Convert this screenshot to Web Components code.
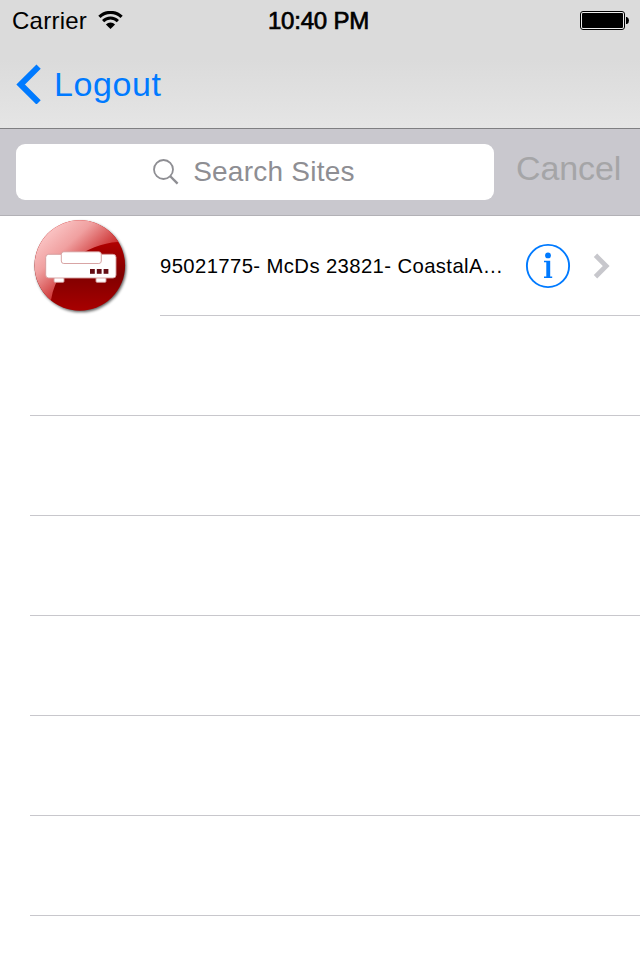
<!DOCTYPE html>
<html lang="en">
<head>
<meta charset="utf-8">
<title>Sites</title>
<style>
  body {
    margin: 0;
    background: #fff;
    font-family: "Liberation Sans", Arial, sans-serif;
  }
</style>
</head>
<body>
<sites-app></sites-app>

<script>
class StatusBar extends HTMLElement {
  connectedCallback() {
    this.attachShadow({ mode: 'open' });
    this.shadowRoot.innerHTML = `
      <style>
        :host {
          display: grid;
          grid-template-columns: 1fr auto 1fr;
          align-items: center;
          height: 40px;
          padding: 0 11px 0 12px;
          font-size: 24px;
          color: #000;
        }
        span {
          line-height: 38px;
          padding-top: 2px;
        }
        .left {
          display: flex;
          align-items: center;
          gap: 11px;
          letter-spacing: 0.25px;
        }
        .time {
          -webkit-text-stroke: 0.7px #000;
          letter-spacing: -0.2px;
          margin-right: 4px;
        }
        .battery {
          justify-self: end;
        }
        svg { display: block; }
      </style>
      <div class="left">
        <span><slot name="carrier"></slot></span>
        <svg width="25" height="18" viewBox="0 0 25 18">
          <path d="M1.4 5.9 A16 16 0 0 1 23.6 5.9" fill="none" stroke="#000" stroke-width="3.2"/>
          <path d="M5.1 10.1 A10.4 10.4 0 0 1 19.9 10.1" fill="none" stroke="#000" stroke-width="3"/>
          <path d="M12.5 18 L7.9 13.4 A6.6 6.6 0 0 1 17.1 13.4 Z"/>
        </svg>
      </div>
      <span class="time"><slot name="time"></slot></span>
      <svg class="battery" width="49" height="19" viewBox="0 0 49 19">
        <rect x="0.5" y="0.5" width="44" height="18" rx="2.5" fill="#ededed" stroke="#000"/>
        <rect x="2" y="2" width="41" height="15" rx="1"/>
        <path d="M46 6 H47 Q49 7 49 9.5 Q49 12 47 13 H46 Z"/>
      </svg>
    `;
  }
}

class NavBar extends HTMLElement {
  connectedCallback() {
    this.attachShadow({ mode: 'open' });
    this.shadowRoot.innerHTML = `
      <style>
        :host {
          display: flex;
          align-items: center;
          height: 88px;
          padding-left: 16px;
          color: #007aff;
        }
        a {
          display: flex;
          align-items: center;
          gap: 12px;
          font-size: 34px;
          line-height: 40px;
          letter-spacing: 0.6px;
        }
        svg { display: block; }
      </style>
      <a>
        <svg width="26" height="40" viewBox="0 0 26 40">
          <path d="M22.6 2.6 L4.6 20.5 L22.6 38.4" fill="none" stroke="currentColor" stroke-width="6"/>
        </svg>
        <span><slot></slot></span>
      </a>
    `;
  }
}

class SearchBar extends HTMLElement {
  connectedCallback() {
    this.attachShadow({ mode: 'open' });
    this.shadowRoot.innerHTML = `
      <style>
        :host {
          display: flex;
          box-sizing: border-box;
          height: 88px;
          padding: 15px 16px 0;
          gap: 22px;
          background: #c9c8ce;
          border-top: 1px solid #7f7f82;
          border-bottom: 1px solid #b2b1b6;
        }
        .field {
          display: flex;
          align-items: center;
          justify-content: center;
          flex: none;
          box-sizing: border-box;
          width: 478px;
          height: 56px;
          padding-right: 2px;
          gap: 14px;
          border-radius: 9px;
          background: #fff;
          color: #8e8e93;
          font-size: 28px;
          line-height: 56px;
          letter-spacing: 0.25px;
        }
        .cancel {
          font-size: 34px;
          line-height: 49px;
          letter-spacing: -0.1px;
          color: #a5a5a7;
        }
        svg { display: block; }
      </style>
      <div class="field">
        <svg width="26" height="26" viewBox="0 0 26 26" fill="none" stroke="currentColor">
          <circle cx="10.5" cy="10.5" r="9.5" stroke-width="1.8"/>
          <path d="M17 17 L24.6 24.6" stroke-width="2.4"/>
        </svg>
        <span><slot></slot></span>
      </div>
      <span class="cancel">Cancel</span>
    `;
  }
}

class SiteRow extends HTMLElement {
  connectedCallback() {
    this.attachShadow({ mode: 'open' });
    this.shadowRoot.innerHTML = `
      <style>
        :host {
          display: flex;
          box-sizing: border-box;
          height: 100px;
          padding-left: 30px;
        }
        .icon {
          width: 130px;
        }
        .content {
          display: flex;
          align-items: center;
          flex: 1;
          border-bottom: 1px solid #c8c7cc;
          color: #000;
        }
        .name {
          width: 365px;
          padding-top: 2px;
          font-size: 20.3px;
          letter-spacing: 0.39px;
          white-space: nowrap;
        }
        .chevron {
          margin-left: 22px;
        }
        svg { display: block; }
      </style>
      <div class="icon">
        <svg width="100" height="100" viewBox="0 0 100 100">
          <defs>
            <linearGradient id="ball" x1="0" y1="0" x2="0" y2="1">
              <stop offset="0" stop-color="#d00000"/>
              <stop offset="0.3" stop-color="#a80000"/>
              <stop offset="0.6" stop-color="#800000"/>
              <stop offset="1" stop-color="#a80000"/>
            </linearGradient>
            <linearGradient id="gloss" x1="0.2" y1="0.1" x2="0.75" y2="0.6">
              <stop offset="0" stop-color="#fccaca"/>
              <stop offset="0.4" stop-color="#f0a0a0"/>
              <stop offset="0.72" stop-color="#d65050"/>
              <stop offset="1" stop-color="#c01010"/>
            </linearGradient>
            <clipPath id="disc"><circle cx="49.8" cy="49.5" r="45.2"/></clipPath>
            <filter id="soft" x="-10%" y="-10%" width="120%" height="120%">
              <feGaussianBlur stdDeviation="1.5"/>
            </filter>
          </defs>
          <circle cx="51" cy="50.9" r="45.2" opacity="0.65" filter="url(#soft)"/>
          <circle cx="49.8" cy="49.5" r="45.3" fill="url(#ball)"/>
          <path clip-path="url(#disc)" d="M0 0 H100 V26 C72 23 29 38 21 84 L0 84 Z" fill="url(#gloss)"/>
          <g fill="#fff" stroke="#d49a9a" stroke-width="0.9">
            <rect x="24" y="61.5" width="10" height="4.8" rx="1"/>
            <rect x="66" y="61.5" width="10" height="4.8" rx="1"/>
            <rect x="15.7" y="38.3" width="70.3" height="23.7" rx="3"/>
            <rect x="31.3" y="35.8" width="40" height="11.7" rx="2.5"/>
          </g>
          <g fill="#640d14">
            <rect x="60" y="53" width="4.8" height="4.8"/>
            <rect x="66.8" y="53" width="4.8" height="4.8"/>
            <rect x="73.6" y="53" width="4.8" height="4.8"/>
          </g>
        </svg>
      </div>
      <div class="content">
        <span class="name"><slot></slot></span>
        <svg width="46" height="46" viewBox="0 0 46 46" fill="#007aff">
          <circle cx="23" cy="23" r="21.1" fill="none" stroke="#007aff" stroke-width="1.9"/>
          <circle cx="23" cy="12.4" r="2.9"/>
          <path d="M19 17.8 H25.2 V33.6 H27.2 V35 H19 V33.6 H21.3 V19.2 H19 Z"/>
        </svg>
        <svg class="chevron" width="18" height="26" viewBox="0 0 18 26">
          <path d="M2.5 2.3 L13.2 13 L2.5 23.7" fill="none" stroke="#c7c7cc" stroke-width="4.8"/>
        </svg>
      </div>
    `;
  }
}

class EmptyRow extends HTMLElement {
  connectedCallback() {
    this.attachShadow({ mode: 'open' });
    this.shadowRoot.innerHTML = `
      <style>
        :host {
          display: block;
          box-sizing: border-box;
          height: 100px;
          margin-left: 30px;
          border-bottom: 1px solid #c8c7cc;
        }
      </style>
    `;
  }
}

class SitesApp extends HTMLElement {
  connectedCallback() {
    this.attachShadow({ mode: 'open' });
    this.shadowRoot.innerHTML = `
      <style>
        :host {
          display: block;
          width: 640px;
          height: 960px;
          overflow: hidden;
          background: #fff;
        }
        header {
          background: linear-gradient(#dbdbdb 0, #dbdbdb 60px, #e5e5e5 128px);
        }
      </style>
      <header>
        <status-bar>
          <span slot="carrier">Carrier</span>
          <span slot="time">10:40 PM</span>
        </status-bar>
        <nav-bar>Logout</nav-bar>
      </header>
      <search-bar>Search Sites</search-bar>
      <main>
        <site-row>95021775- McDs 23821- CoastalA…</site-row>
        <empty-row></empty-row>
        <empty-row></empty-row>
        <empty-row></empty-row>
        <empty-row></empty-row>
        <empty-row></empty-row>
        <empty-row></empty-row>
      </main>
    `;
  }
}

customElements.define('status-bar', StatusBar);
customElements.define('nav-bar', NavBar);
customElements.define('search-bar', SearchBar);
customElements.define('site-row', SiteRow);
customElements.define('empty-row', EmptyRow);
customElements.define('sites-app', SitesApp);
</script>
</body>
</html>
